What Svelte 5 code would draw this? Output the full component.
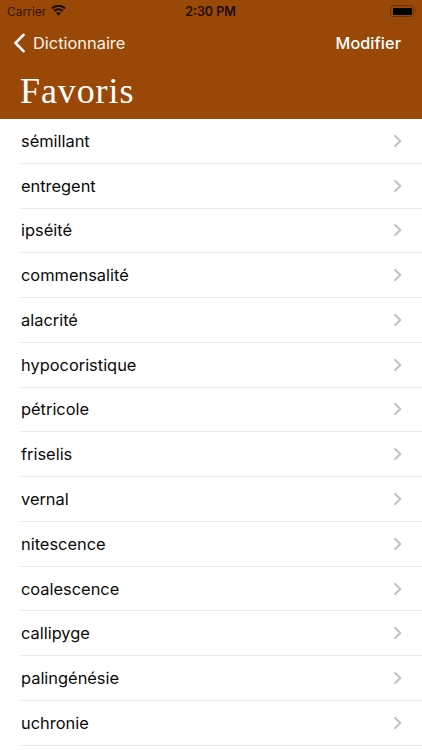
<script>
  const favoris = [
    'sémillant', 'entregent', 'ipséité', 'commensalité', 'alacrité',
    'hypocoristique', 'pétricole', 'friselis', 'vernal', 'nitescence',
    'coalescence', 'callipyge', 'palingénésie', 'uchronie'
  ]
</script>

<div class="screen">
  <header>
    <div class="status">
      <div class="carrier">
        <span>Carrier</span>
        <svg width="15" height="11" viewBox="0 0 16 12">
          <path d="M8 11.6 5.4 8.9a3.7 3.7 0 0 1 5.2 0z" fill="#1a0d02" />
          <path d="M3.9 7.3 2.4 5.8a7.9 7.9 0 0 1 11.2 0L12.1 7.3a5.8 5.8 0 0 0-8.2 0z" fill="#1a0d02" />
          <path d="M1.4 4.6 0 3.1a11.3 11.3 0 0 1 16 0l-1.4 1.5a9.3 9.3 0 0 0-13.2 0z" fill="#1a0d02" />
        </svg>
      </div>
      <span class="time">2:30 PM</span>
      <div class="battery"><i></i></div>
    </div>
    <nav>
      <div class="back">
        <svg width="13" height="20" viewBox="0 0 13 20">
          <path d="M10.5 1.8 2.5 10l8 8.2" fill="none" stroke="#fff" stroke-width="2.6" stroke-linecap="round" stroke-linejoin="round" />
        </svg>
        <span>Dictionnaire</span>
      </div>
      <span class="edit">Modifier</span>
    </nav>
    <h1>Favoris</h1>
  </header>

  <ul>
    {#each favoris as mot}
      <li>
        <span>{mot}</span>
        <svg width="9" height="14" viewBox="0 0 9 14">
          <path d="M1.5 1.2 7.3 7l-5.8 5.8" fill="none" stroke="#c2c2c6" stroke-width="2" />
        </svg>
      </li>
    {/each}
  </ul>
</div>

<style>
  :global(body) {
    margin: 0;
    background: #fff;
  }
  .screen {
    width: 422px;
    height: 750px;
    overflow: hidden;
    font-family: Inter, "Liberation Sans", sans-serif;
  }
  header {
    background: #994808;
    height: 119px;
    box-sizing: border-box;
    color: #fff;
  }
  .status {
    height: 22px;
    display: grid;
    grid-template-columns: 1fr auto 1fr;
    align-items: center;
    padding: 0 7px 0 8px;
    font-size: 12px;
    color: #1a0d02;
  }
  .carrier {
    display: flex;
    align-items: center;
    gap: 5px;
    margin-left: -1px;
  }
  .carrier svg {
    margin-top: -2px;
  }
  .carrier span {
    opacity: 0.8;
  }
  .time {
    font-weight: 600;
    font-size: 12.5px;
    margin-left: -2px;
  }
  .battery {
    justify-self: end;
    position: relative;
    width: 19px;
    height: 7px;
    padding: 1.5px;
    border: 1px solid #6b3305;
    border-radius: 3px;
    margin-right: 1px;
  }
  .battery::after {
    content: "";
    position: absolute;
    right: -3px;
    top: 2.5px;
    width: 1px;
    height: 3px;
    background: #6b3305;
  }
  .battery i {
    display: block;
    height: 100%;
    background: #000;
    border-radius: 1px;
  }
  nav {
    height: 42px;
    display: flex;
    align-items: center;
    justify-content: space-between;
    padding: 0 21px 0 13px;
    font-size: 16.2px;
  }
  .back {
    display: flex;
    align-items: center;
    gap: 7px;
    color: #fdf3e8;
    font-size: 16.4px;
  }
  .edit {
    font-weight: 500;
    letter-spacing: 0.1px;
  }
  h1 {
    margin: 0;
    padding: 5px 20px 0;
    font-family: "Liberation Serif", serif;
    font-weight: 400;
    font-size: 36px;
    line-height: 44px;
    letter-spacing: 0.9px;
  }
  ul {
    list-style: none;
    margin: 0;
    padding: 0 0 0 21px;
  }
  li {
    height: 44.77px;
    box-sizing: border-box;
    display: flex;
    align-items: center;
    justify-content: space-between;
    padding-right: 20px;
    border-bottom: 1px solid #e8e8ea;
    font-size: 16.4px;
    color: #0a0a0a;
  }
</style>
